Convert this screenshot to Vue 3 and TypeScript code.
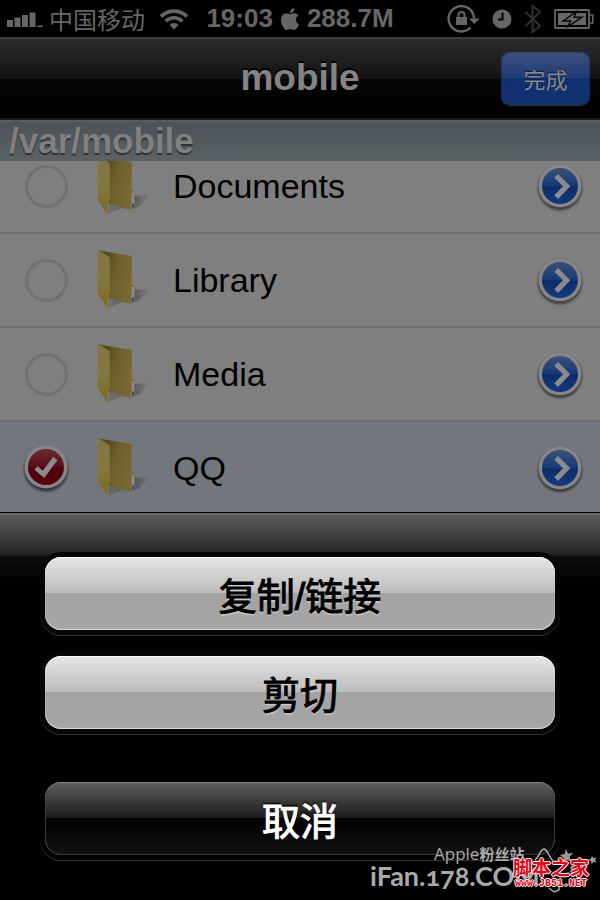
<script setup lang="ts">
import { ref } from 'vue'

interface Entry {
  name: string
  selected: boolean
}

const path = '/var/mobile'
const entries = ref<Entry[]>([
  { name: 'Documents', selected: false },
  { name: 'Library', selected: false },
  { name: 'Media', selected: false },
  { name: 'QQ', selected: true },
])
</script>

<template>
  <div class="screen">
    <svg class="defs" width="0" height="0" aria-hidden="true">
      <defs>
        <linearGradient id="folder-front" x1="0" y1="0" x2="0" y2="1">
          <stop offset="0" stop-color="#807547" />
          <stop offset="0.5" stop-color="#857740" />
          <stop offset="1" stop-color="#7b671f" />
        </linearGradient>
        <linearGradient id="folder-back" x1="0.3" y1="0" x2="1" y2="0.3">
          <stop offset="0" stop-color="#574b20" />
          <stop offset="0.4" stop-color="#6d5f2c" />
          <stop offset="1" stop-color="#786833" />
        </linearGradient>
        <linearGradient id="folder-shadow" x1="0" y1="0" x2="1" y2="0">
          <stop offset="0" stop-color="#000" stop-opacity="0.12" />
          <stop offset="0.6" stop-color="#000" stop-opacity="0.3" />
          <stop offset="1" stop-color="#000" stop-opacity="0.03" />
        </linearGradient>
        <linearGradient id="blue-disc" x1="0" y1="0" x2="0" y2="1">
          <stop offset="0" stop-color="#3b5175" />
          <stop offset="0.5" stop-color="#17397a" />
          <stop offset="0.52" stop-color="#0c2c68" />
          <stop offset="1" stop-color="#123a80" />
        </linearGradient>
        <linearGradient id="red-disc" x1="0" y1="0" x2="0" y2="1">
          <stop offset="0" stop-color="#6a2a33" />
          <stop offset="0.5" stop-color="#5b0c18" />
          <stop offset="0.52" stop-color="#4d000a" />
          <stop offset="1" stop-color="#5c000c" />
        </linearGradient>
        <radialGradient id="disc-shadow">
          <stop offset="0.82" stop-color="#000" stop-opacity="0.6" />
          <stop offset="1" stop-color="#000" stop-opacity="0" />
        </radialGradient>
      </defs>
    </svg>

    <header class="status">
      <div class="status-left">
        <svg class="signal" width="37" height="18" viewBox="0 0 37 18" aria-hidden="true">
          <path d="M1 10h6v7H1zM8.500 7.500h6v9.500h-6zM16 5h6v12h-6zM23.500 2.500h6V17h-6zM31.500 15.500H37V17h-5.500z" />
        </svg>
        <span class="carrier">中国移动</span>
        <svg class="wifi" width="30" height="22" viewBox="0 0 30 22" aria-hidden="true">
          <g fill="none" stroke="#666" stroke-width="3.600">
            <path d="M2 8.500a18.500 18.500 0 0 1 26 0" />
            <path d="M6.700 13.200a11.700 11.700 0 0 1 16.600 0" />
          </g>
          <path d="M15 21.500l-4.500-4.500a6.200 6.200 0 0 1 9 0z" />
        </svg>
      </div>
      <div class="status-center">
        <span>19:03</span>
        <svg class="apple" width="22" height="22" viewBox="0 0 24 24" aria-hidden="true">
          <path d="M12.152 6.896c-.948 0-2.415-1.078-3.960-1.040-2.040.027-3.910 1.183-4.961 3.014-2.117 3.675-.546 9.103 1.519 12.090 1.013 1.454 2.208 3.090 3.792 3.039 1.520-.065 2.090-.987 3.935-.987 1.831 0 2.350.987 3.960.948 1.637-.026 2.676-1.480 3.676-2.948 1.156-1.688 1.636-3.325 1.662-3.415-.039-.013-3.182-1.221-3.220-4.857-.026-3.040 2.480-4.494 2.597-4.559-1.429-2.090-3.623-2.324-4.390-2.376-2-.156-3.675 1.090-4.610 1.090zM15.530 3.830c.843-1.012 1.400-2.427 1.245-3.830-1.207.052-2.662.805-3.532 1.818-.780.896-1.454 2.338-1.273 3.714 1.338.104 2.715-.688 3.559-1.701" />
        </svg>
        <span>288.7M</span>
      </div>
      <div class="status-right">
        <svg width="33" height="30" viewBox="0 0 33 30" aria-hidden="true">
          <path d="M23.500 23.500A12.700 12.700 0 1 1 27 14.500" fill="none" stroke="#666" stroke-width="2.400" />
          <path d="M22 14.500h10.500l-5.200 5.500zM9 13h11v8H9z" />
          <path d="M11.500 13.500v-2.500a3 3 0 0 1 6 0v2.500" fill="none" stroke="#666" stroke-width="2" />
        </svg>
        <svg width="20" height="20" viewBox="0 0 20 20" aria-hidden="true">
          <circle cx="10" cy="10" r="9.500" />
          <path d="M10.500 3.500v7H6" fill="none" stroke="#000" stroke-width="2" />
        </svg>
        <svg class="bluetooth" width="18" height="30" viewBox="0 0 18 30" aria-hidden="true">
          <path d="M1.500 8L16 22 8.500 28V2L16 8 1.500 22" fill="none" stroke="#2c2c2c" stroke-width="2.200" />
        </svg>
        <svg width="40" height="20" viewBox="0 0 40 20" aria-hidden="true">
          <rect x="1" y="1" width="34" height="18" rx="1" fill="none" stroke="#666" stroke-width="1.800" />
          <path d="M36 6h2.800v8H36" fill="none" stroke="#666" stroke-width="1.600" />
          <path d="M4 4h28v12H4z" />
          <path d="M22.500 2.500L9 12h7.500l-2.500 5.500L28 8.200h-8z" stroke="#000" stroke-width="1.400" />
        </svg>
      </div>
    </header>

    <nav class="navbar">
      <h1>mobile</h1>
      <button type="button" class="done">完成</button>
    </nav>

    <div class="path">{{ path }}</div>

    <main class="files">
      <ul>
        <li v-for="entry in entries" :key="entry.name" :class="{ selected: entry.selected }">
          <span class="tick">
            <input :id="'pick-' + entry.name" v-model="entry.selected" type="checkbox" />
            <svg v-if="entry.selected" width="52" height="52" viewBox="-26 -25 52 52" aria-hidden="true">
              <circle cy="2.500" r="24" fill="url(#disc-shadow)" />
              <circle r="21.500" fill="#868686" />
              <circle r="18" fill="url(#red-disc)" />
              <path d="M-11.700 2.700L-8.300-1-3.300 3.700 7.300-10.300l4 3.500L-1.700 11z" fill="#8b8b8b" />
            </svg>
          </span>
          <svg class="folder" width="56" height="64" viewBox="0 0 56 64" aria-hidden="true">
            <path d="M12 60L13 46l23-4 17-1-9 11-8 3-10-1z" fill="url(#folder-shadow)" />
            <path d="M1.700 2.300L35.700 8v28.500l3 1v16.500L34 55.700 12 50z" fill="url(#folder-back)" />
            <path d="M35.500 38.500h2.800V53l-2.800.800z" fill="#898989" />
            <path d="M36 49.500h2V53l-2 .500z" fill="#244b8c" />
            <path d="M1.700 2.300L13.300 9.500V45L11.700 47v14L1.700 46z" fill="url(#folder-front)" stroke="#897c49" stroke-width="0.700" />
          </svg>
          <label :for="'pick-' + entry.name">{{ entry.name }}</label>
          <button type="button" class="open" :aria-label="'Open ' + entry.name">
            <svg width="52" height="52" viewBox="-26 -26 52 52" aria-hidden="true">
              <circle cy="2" r="24" fill="url(#disc-shadow)" />
              <circle r="21.500" fill="#868686" />
              <circle r="18" fill="url(#blue-disc)" />
              <path d="M-5.700-8.300L-2-12 10.300.300-2 13-5.700 9.300 3 .300z" fill="#8b8b8b" />
            </svg>
          </button>
        </li>
      </ul>
    </main>

    <section class="sheet">
      <button type="button" class="action">复制/链接</button>
      <button type="button" class="action">剪切</button>
      <button type="button" class="action cancel">取消</button>

      <div class="marks">
        <div class="fan">
          <span class="fan-name">Apple<b>粉丝站</b></span>
          <span class="fan-site">iFan.178.COM</span>
        </div>
        <svg class="stars" width="66" height="50" viewBox="0 0 66 50" aria-hidden="true">
          <path d="M4 13C9 10 8 3 13 2c5 2 4 7 9 12M20 34l8 1 0 8-5 2-5-4" fill="none" stroke="#aaa" stroke-width="1.500" />
          <path d="M35 2l2 4.500 5-.500-3.500 4 2.500 4.500-5-1.500-4 3 .500-5L29 8l4.500-1zM61 9l1.500 2 3-.500-1.500 2.500 1.500 2.500-3-.500-2 2-.500-3-2.500-1.200 2.500-1.300z" fill="#999" />
        </svg>
        <div class="script-home">
          <strong>脚本之家</strong>
          <span>www.JB51.NET</span>
        </div>
      </div>
    </section>
  </div>
</template>

<style>
body {
  margin: 0;
  background: #000;
}
</style>

<style scoped>
.screen {
  display: flex;
  flex-direction: column;
  min-height: 100vh;
  background: #000;
  font-family: "Liberation Sans", "Noto Sans CJK SC", sans-serif;
}

.defs {
  position: absolute;
}

svg {
  display: block;
  flex: none;
}

button {
  margin: 0;
  padding: 0;
  border: 0;
  font-family: inherit;
  cursor: pointer;
}

.status {
  display: grid;
  grid-template-columns: 1fr auto 1fr;
  align-items: center;
  height: 37px;
  padding: 0 6px;
  color: #666;
  font-size: 26px;
  font-weight: 700;
}

.status svg {
  fill: #666;
}

.status-left,
.status-center,
.status-right {
  display: flex;
  align-items: center;
}

.status-left {
  gap: 6px;
}

.carrier {
  font-size: 24px;
  font-weight: 400;
}

.wifi {
  margin-left: 8px;
}

.status-center {
  gap: 6px;
}

.status-right {
  justify-content: flex-end;
  gap: 12px;
}

.navbar {
  display: grid;
  grid-template-columns: 1fr auto 1fr;
  align-items: center;
  box-sizing: border-box;
  height: 83px;
  padding: 0 10px 2px;
  border-top: 2px solid #3c3c3c;
  border-bottom: 2px solid #181b1d;
  background: linear-gradient(#2c2c2c, #131313 50%, #060606 51%, #000);
}

h1 {
  grid-column: 2;
  margin: 0;
  color: #848484;
  font-size: 37px;
  line-height: 44px;
  text-shadow: 0 -2px 1px #000;
}

.done {
  justify-self: end;
  width: 89px;
  height: 54px;
  border-radius: 9px;
  background: linear-gradient(#41527b, #1e3b77 50%, #10306f 51%, #11326f);
  box-shadow: inset 0 1px 2px #101828, 0 1px 1px #333;
  color: #898989;
  font-size: 22px;
  text-shadow: 0 -1px 1px #0a1a3d;
}

.path {
  position: relative;
  z-index: 1;
  box-sizing: border-box;
  height: 41px;
  padding: 0 9px;
  border-top: 2px solid #555b5f;
  background: linear-gradient(#4b5258, #5c6366);
  color: #808080;
  font-size: 35px;
  font-weight: 700;
  line-height: 38px;
  text-shadow: 0 2px 1px #2d3236;
}

/* The first row is scrolled partly under the path bar. */
.files {
  margin-top: -21px;
  margin-bottom: -4px;
}

ul {
  margin: 0;
  padding: 0;
  list-style: none;
}

li {
  display: flex;
  align-items: center;
  box-sizing: border-box;
  height: 94px;
  padding: 0 14px 0 20px;
  border-bottom: 2px solid #717171;
  background: #7f7f7f;
}

li.selected {
  background: #73777d;
}

.tick {
  display: grid;
  place-items: center;
  width: 52px;
  height: 52px;
}

.tick > * {
  grid-area: 1 / 1;
}

.tick svg {
  pointer-events: none;
}

input {
  box-sizing: border-box;
  width: 43px;
  height: 43px;
  margin: 0;
  border: 3px solid #727272;
  border-radius: 50%;
  appearance: none;
}

input:checked {
  border-color: transparent;
}

.folder {
  margin: 0 21px 0 24px;
}

label {
  flex: 1;
  color: #000;
  font-size: 34px;
}

.open {
  background: none;
}

.sheet {
  position: relative;
  display: flex;
  flex: 1;
  flex-direction: column;
  gap: 26px;
  padding: 44px 45px 45px;
  border-top: 1px solid #000;
  background: linear-gradient(#6a686a 0, #6a686a 2px, #5b595b 3px, #232323 42px, #0d0d0d 43px, #000 75px);
}

.action {
  height: 73px;
  border-radius: 16px;
  background: linear-gradient(#e6e6e6, #bcbcbc 49%, #a3a3a3 50%, #a5a5a5);
  box-shadow: inset 0 1px 1px #fff, inset 0 -1px 1px #e0e0e0, 0 0 0 5px #060606, 0 1px 0 5px #303030;
  color: #000;
  font-size: 38px;
  -webkit-text-stroke: 1px currentColor;
  text-shadow: 0 2px 1px #ccc;
}

.cancel {
  margin-top: 27px;
  background: linear-gradient(#5f5f5f, #1b1b1b 49%, #000 50%, #121212);
  box-shadow: inset 0 1px 1px #888, inset 0 0 0 1px #383838, 0 0 0 5px #000, 0 1px 0 5px #303030;
  color: #fff;
  text-shadow: 0 -2px 2px #000;
}

/* Site marks laid over the lower right corner of the sheet. */
.marks {
  position: absolute;
  right: 0;
  bottom: 0;
  width: 230px;
  height: 56px;
  color: #aaa;
  pointer-events: none;
}

.fan {
  display: flex;
  flex-direction: column;
}

.fan-name {
  padding-left: 64px;
  font-family: "Open Sans", "Noto Sans CJK SC", sans-serif;
  font-size: 17px;
  line-height: 20px;
}

.fan-name b {
  font-size: 15px;
}

.fan-site {
  font-family: Lato, sans-serif;
  font-size: 27px;
  font-variant-numeric: oldstyle-nums;
  font-weight: 700;
  line-height: 24px;
}

.stars {
  position: absolute;
  top: 3px;
  right: 3px;
}

.script-home {
  position: absolute;
  top: 14px;
  right: 11px;
  display: flex;
  flex-direction: column;
  align-items: center;
  color: #f00010;
  text-shadow: 1px 0 #fff, -1px 0 #fff, 0 1px #fff, 0 -1px #fff;
}

.script-home strong {
  font-size: 19px;
  line-height: 21px;
}

.script-home span {
  font-family: "Liberation Mono", monospace;
  font-size: 10px;
  font-weight: 700;
  line-height: 10px;
}
</style>
